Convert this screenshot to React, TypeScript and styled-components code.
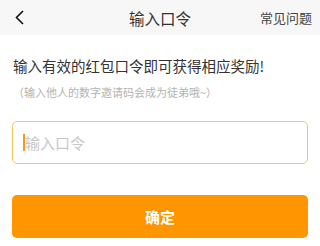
import React from 'react';
import styled, { createGlobalStyle } from 'styled-components';

const GlobalStyle = createGlobalStyle`
  html, body {
    margin: 0;
    padding: 0;
    background: #ffffff;
    font-family: "Noto Sans CJK SC", "Noto Sans", sans-serif;
  }
`;

const Page = styled.div`
  width: 320px;
  height: 246px;
  display: flex;
  flex-direction: column;
  background: #ffffff;
`;

const NavBar = styled.div`
  height: 35px;
  background: #f7f7f7;
  display: grid;
  grid-template-columns: 60px 1fr 60px;
  align-items: center;
`;

const BackButton = styled.div`
  padding-left: 14px;
  display: flex;
  align-items: center;
  color: #111;
`;

const Title = styled.div`
  text-align: center;
  font-size: 15.5px;
  color: #333;
`;

const NavAction = styled.div`
  font-size: 13px;
  color: #444;
  text-align: right;
  padding-right: 11px;
  white-space: nowrap;
`;

const Content = styled.div`
  padding: 20px 12px 0;
  display: flex;
  flex-direction: column;
`;

const Lead = styled.div`
  font-size: 14.5px;
  line-height: 22px;
  color: #333;
  padding-left: 1px;
`;

const Hint = styled.div`
  margin-top: 7px;
  font-size: 11px;
  line-height: 16px;
  color: #b3b3b3;
  padding-left: 1px;
`;

const InputBox = styled.div`
  margin-top: 21px;
  height: 41px;
  border: 1px solid #f6c36b;
  border-radius: 5px;
  display: flex;
  align-items: center;
  padding-left: 10px;
`;

const Caret = styled.span`
  width: 2px;
  height: 17px;
  background: #f59a1b;
`;

const Placeholder = styled.span`
  font-size: 15px;
  color: #c8c8c8;
`;

const Submit = styled.div`
  margin-top: 31px;
  height: 43px;
  border-radius: 5px;
  background: #ff9500;
  color: #fff;
  font-size: 15px;
  font-weight: 700;
  display: flex;
  align-items: center;
  justify-content: center;
`;

export default function App() {
  return (
    <Page>
      <GlobalStyle />
      <NavBar>
        <BackButton>
          <svg width="11" height="15" viewBox="0 0 11 15">
            <path d="M9 1 L2.5 7.5 L9 14" fill="none" stroke="#111" strokeWidth="1.6" />
          </svg>
        </BackButton>
        <Title>输入口令</Title>
        <NavAction>常见问题</NavAction>
      </NavBar>
      <Content>
        <Lead>输入有效的红包口令即可获得相应奖励!</Lead>
        <Hint>（输入他人的数字邀请码会成为徒弟哦~）</Hint>
        <InputBox>
          <Caret />
          <Placeholder>输入口令</Placeholder>
        </InputBox>
        <Submit>确定</Submit>
      </Content>
    </Page>
  );
}
